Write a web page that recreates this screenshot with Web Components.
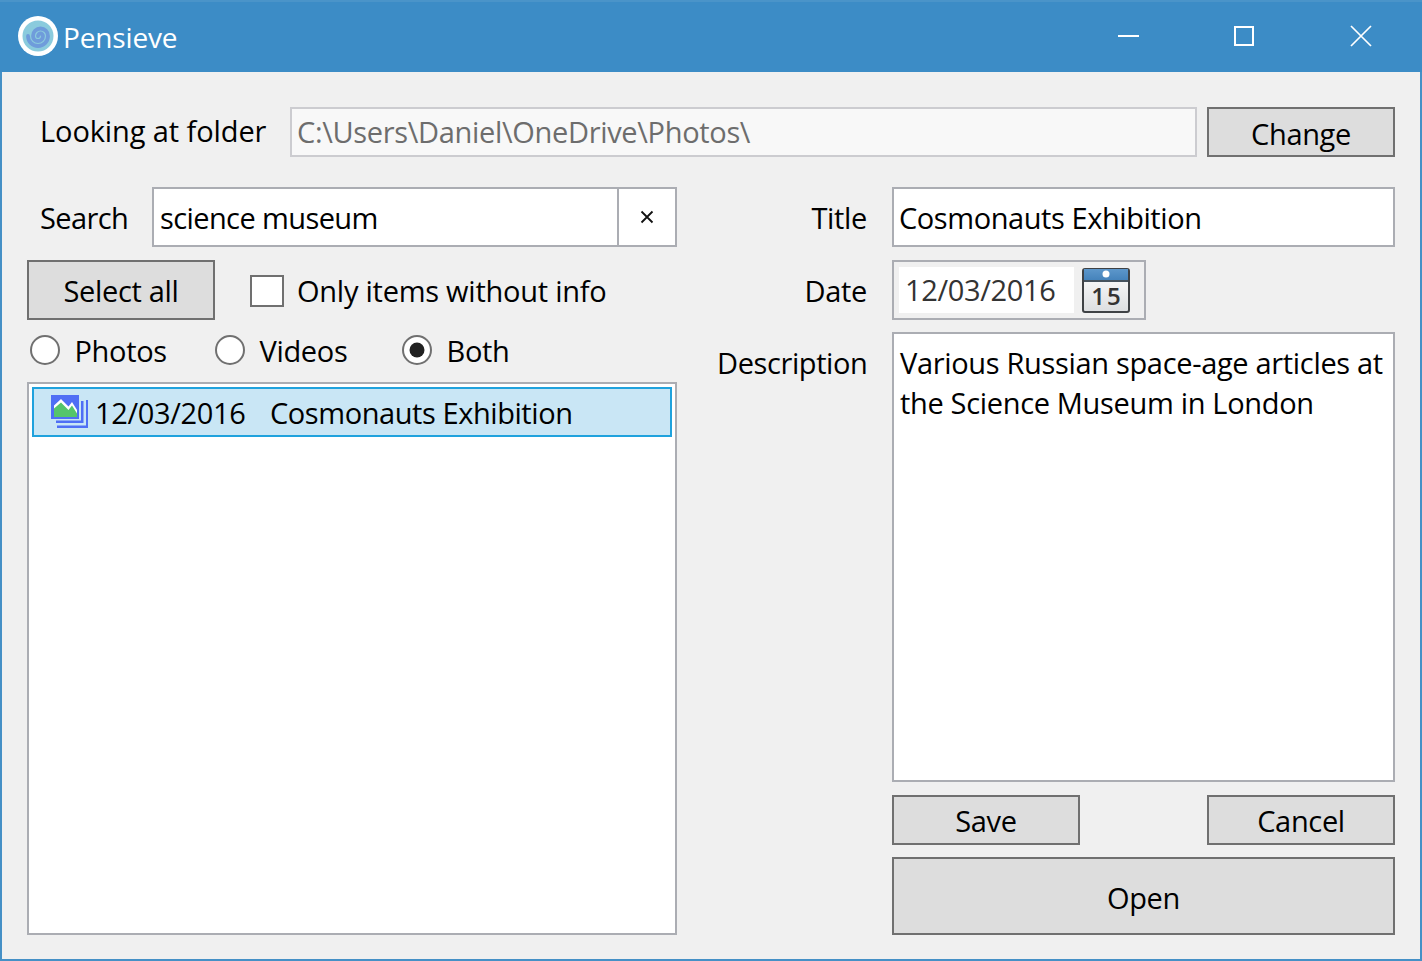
<!doctype html>
<html lang="en">

<head>
  <meta charset="UTF-8" />
  <title>Pensieve</title>
  <style>
    html, body {
      margin: 0;
      padding: 0;
      height: 100%;
      font-family: "Open Sans", "Noto Sans", sans-serif;
      font-size: 29px;
      letter-spacing: -0.33px;
      color: #000;
    }
  </style>
</head>

<body>
  <app-window>
    <title-bar slot="bar">Pensieve</title-bar>

    <div class="folder" slot="folder">
      <ui-label style="letter-spacing:-0.1px">Looking at folder</ui-label>
      <text-field disabled>C:\Users\Daniel\OneDrive\Photos\</text-field>
      <ui-button class="change">Change</ui-button>
    </div>

    <filter-pane slot="left"></filter-pane>
    <details-pane slot="right"></details-pane>
  </app-window>

  <script>
    // small helper so each element only has to give its markup
    class Base extends HTMLElement {
      constructor() {
        super();
        this.attachShadow({ mode: 'open' }).innerHTML = this.markup();
      }
    }

    customElements.define('app-window', class extends Base {
      markup() {
        return `
        <style>
          :host {
            display: flex;
            flex-direction: column;
            height: 961px;
            box-sizing: border-box;
            border: 2px solid #4590c6;
            border-top: 0;
            background: #f0f0f0;
          }
          .body {
            flex: 1;
            padding: 35px 25px 24px 25px;
            display: grid;
            grid-template-columns: 650px 1fr;
            grid-template-rows: 50px 1fr;
            column-gap: 40px;
            row-gap: 30px;
            min-height: 0;
          }
          .top { grid-column: 1 / 3; }
        </style>
        <slot name="bar"></slot>
        <div class="body">
          <div class="top"><slot name="folder"></slot></div>
          <slot name="left"></slot>
          <slot name="right"></slot>
        </div>`;
      }
    });

    customElements.define('title-bar', class extends Base {
      markup() {
        return `
        <style>
          :host {
            display: flex;
            align-items: center;
            height: 72px;
            margin: 0 -2px;
            background: #3c8cc6;
            border-top: 2px solid #4a94c9;
            box-sizing: border-box;
            color: #fff;
            font-size: 28px;
            letter-spacing: -0.15px;
            padding-left: 18px;
          }
          svg.logo { width: 40px; height: 40px; margin-right: 5px; flex: none; margin-bottom: 2px; }
          .name { flex: 1; margin-bottom: 1px; }
          .ctl { display: flex; align-items: center; height: 100%; padding-bottom: 2px; box-sizing: border-box; }
          .ctl svg { display: block; }
        </style>
        <svg class="logo" viewBox="0 0 40 40">
          <circle cx="20" cy="20" r="20" fill="#fff"/>
          <circle cx="20" cy="20" r="15.500" fill="#8bcbdd"/>
          <path d="M20 20a2.500 2.500 0 0 1 5 0a5 5 0 0 1-10 0a7.500 7.500 0 0 1 15 0a10 10 0 0 1-20 0" fill="none" stroke="#6f9cdb" stroke-width="3.800" stroke-linecap="round"/>
        </svg>
        <span class="name"><slot></slot></span>
        <div class="ctl">
          <svg width="22" height="22" viewBox="0 0 22 22" style="margin-right:93px"><path d="M0 11h21" stroke="#fff" stroke-width="2"/></svg>
          <svg width="22" height="22" viewBox="0 0 22 22" style="margin-right:95px"><rect x="2" y="2" width="18" height="18" fill="none" stroke="#fff" stroke-width="2"/></svg>
          <svg width="22" height="22" viewBox="0 0 22 22" style="margin-right:50px"><path d="M1 1l20 20M21 1L1 21" stroke="#fff" stroke-width="1.700"/></svg>
        </div>`;
      }
    });

    customElements.define('ui-label', class extends Base {
      markup() {
        return `
        <style>
          :host { display: block; white-space: nowrap; }
        </style>
        <slot></slot>`;
      }
    });

    customElements.define('ui-button', class extends Base {
      markup() {
        return `
        <style>
          :host {
            display: flex;
            align-items: center;
            justify-content: center;
            box-sizing: border-box;
            border: 2px solid #707070;
            background: #dddddd;
            padding-top: 1px;
            white-space: nowrap;
          }
          :host(.change) { padding-top: 2px; }
        </style>
        <slot></slot>`;
      }
    });

    customElements.define('text-field', class extends Base {
      markup() {
        return `
        <style>
          :host {
            display: flex;
            align-items: center;
            box-sizing: border-box;
            border: 2px solid #abadb3;
            background: #fff;
            padding: 0 6px;
            white-space: nowrap;
            min-width: 0;
          }
          :host([disabled]) {
            background: #f8f8f8;
            border-color: #ccccd0;
            color: #6d6d6d;
            padding: 0 5px 2px;
          }
          :host([multiline]) {
            display: block;
            white-space: normal;
            line-height: 40px;
            padding: 9px 6px;
          }
        </style>
        <slot></slot>`;
      }
    });

    customElements.define('ui-check', class extends Base {
      markup() {
        return `
        <style>
          :host { display: flex; align-items: center; gap: 13px; white-space: nowrap; letter-spacing: -0.25px; }
          .box { width: 34px; height: 32px; margin-top: 2px; box-sizing: border-box; border: 2px solid #707070; background: #fff; flex: none; }
        </style>
        <span class="box"></span><slot></slot>`;
      }
    });

    customElements.define('ui-radio', class extends Base {
      markup() {
        return `
        <style>
          :host { display: flex; align-items: center; gap: 14.500px; white-space: nowrap; }
          svg { width: 30px; height: 30px; flex: none; display: block; }
        </style>
        <svg viewBox="0 0 30 30">
          <circle cx="15" cy="15" r="14" fill="#fff" stroke="#707070" stroke-width="2"/>
          ${this.hasAttribute('checked') ? '<circle cx="15" cy="15" r="7.500" fill="#212121"/>' : ''}
        </svg>
        <slot></slot>`;
      }
    });

    customElements.define('photo-list', class extends Base {
      markup() {
        return `
        <style>
          :host {
            display: block;
            box-sizing: border-box;
            border: 2px solid #abadb3;
            background: #fff;
            padding: 3px;
            flex: 1;
            min-height: 0;
          }
        </style>
        <slot></slot>`;
      }
    });

    customElements.define('list-row', class extends Base {
      markup() {
        return `
        <style>
          :host {
            display: flex;
            align-items: center;
            box-sizing: border-box;
            height: 50px;
            border: 2px solid #1fa2dd;
            background: #c9e6f5;
            padding-left: 17px;
            white-space: nowrap;
            letter-spacing: -0.43px;
          }
          svg { width: 37px; height: 34px; margin-right: 7px; flex: none; margin-bottom: 1px; }
          .date { width: 175px; letter-spacing: -0.33px; }
        </style>
        <svg viewBox="0 0 37 34">
          <path d="M30 6h2.500v22H5v-2.500h25z" fill="#4f6ff5"/>
          <path d="M35 5h2v28H6v-2.500h29z" fill="#4f6ff5"/>
          <rect x="0" y="0" width="28" height="24" fill="#4f6ff5"/>
          <rect x="3" y="3" width="23" height="19" fill="#55c56b"/>
          <path d="M3 3h23v13l-5-8-3.500 4.500L10 5l-7 6z" fill="#4f6ff5"/>
          <path d="M3 10.500L10 4l7.500 7.500L21 7l5 8v3.500l-5-8-3.500 4.500L10 7.500l-7 6z" fill="#fff"/>
        </svg>
        <span class="date"><slot name="date"></slot></span>
        <slot></slot>`;
      }
    });

    customElements.define('date-picker', class extends Base {
      markup() {
        return `
        <style>
          :host {
            display: flex;
            align-items: center;
            box-sizing: border-box;
            width: 254px;
            height: 60px;
            border: 2px solid #abadb3;
            padding: 5px 14px 5px 5px;
            gap: 8px;
          }
          .val {
            flex: 1;
            align-self: stretch;
            background: #fff;
            color: #333;
            display: flex;
            align-items: center;
            padding: 0 0 2px 6px;
            white-space: nowrap;
          }
          svg { width: 48px; height: 45px; flex: none; display: block; }
          text { font: 600 24px "Open Sans", sans-serif; letter-spacing: 2px; fill: #333; }
        </style>
        <div class="val"><slot></slot></div>
        <svg viewBox="0 0 48 45">
          <defs>
            <linearGradient id="pg" x1="0" y1="0" x2="0" y2="1">
              <stop offset="0" stop-color="#ffffff"/><stop offset="1" stop-color="#dcdee0"/>
            </linearGradient>
            <linearGradient id="bg" x1="0" y1="0" x2="0" y2="1">
              <stop offset="0" stop-color="#5d97cb"/><stop offset="1" stop-color="#4583bb"/>
            </linearGradient>
          </defs>
          <rect x="1" y="1" width="46" height="43" rx="2" fill="url(#pg)" stroke="#3f4245" stroke-width="2"/>
          <rect x="2" y="1" width="44" height="11" fill="url(#bg)"/>
          <rect x="2" y="12" width="44" height="2" fill="#46535e"/>
          <circle cx="24" cy="6" r="3.500" fill="#fff"/>
          <text x="25" y="37" text-anchor="middle">15</text>
        </svg>`;
      }
    });

    customElements.define('filter-pane', class extends Base {
      markup() {
        return `
        <style>
          :host { display: flex; flex-direction: column; min-height: 0; }
          .search { display: flex; align-items: center; height: 60px; padding-left: 13px; margin-bottom: 13px; letter-spacing: -0.6px; }
          .search ui-label { width: 112px; flex: none; }
          .search text-field { flex: 1; height: 100%; }
          .clear {
            width: 58px;
            height: 100%;
            flex: none;
            box-sizing: border-box;
            border: 2px solid #abadb3;
            border-left: 0;
            background: #fff;
            display: flex;
            align-items: center;
            justify-content: center;
          }
          .select { display: flex; align-items: center; height: 60px; }
          .select ui-button { width: 188px; height: 100%; flex: none; margin-right: 35px; }
          .radios { display: flex; align-items: center; height: 62px; padding: 0 0 2px 3px; box-sizing: border-box; }
          .radios ui-radio:nth-child(1) { width: 185px; }
          .radios ui-radio:nth-child(2) { width: 187px; }
        </style>
        <div class="search">
          <ui-label>Search</ui-label>
          <text-field>science museum</text-field>
          <div class="clear" aria-label="clear">
            <svg width="14" height="14" viewBox="0 0 14 14"><path d="M1.500 1.500l11 11M12.500 1.500l-11 11" stroke="#111" stroke-width="1.800"/></svg>
          </div>
        </div>
        <div class="select">
          <ui-button>Select all</ui-button>
          <ui-check>Only items without info</ui-check>
        </div>
        <div class="radios">
          <ui-radio>Photos</ui-radio>
          <ui-radio>Videos</ui-radio>
          <ui-radio checked>Both</ui-radio>
        </div>
        <photo-list>
          <list-row><span slot="date">12/03/2016</span>Cosmonauts Exhibition</list-row>
        </photo-list>`;
      }
    });

    customElements.define('details-pane', class extends Base {
      markup() {
        return `
        <style>
          :host {
            display: grid;
            grid-template-columns: 150px 503px;
            grid-template-rows: 60px 61px 450px 51px 78px;
            column-gap: 25px;
            row-gap: 12px;
            min-height: 0;
          }
          ui-label { text-align: right; line-height: 60px; padding-top: 1px; }
          ui-label.date { padding-top: 2px; }
          ui-label.top { line-height: 1; padding-top: 16px; letter-spacing: -0.4px; }
          .title { padding-left: 5px; letter-spacing: -0.43px; }
          date-picker { align-self: end; }
          .actions { display: flex; justify-content: space-between; align-self: end; height: 50px; }
          .actions ui-button { width: 188px; }
        </style>
        <ui-label>Title</ui-label>
        <text-field class="title">Cosmonauts Exhibition</text-field>
        <ui-label class="date">Date</ui-label>
        <date-picker>12/03/2016</date-picker>
        <ui-label class="top">Description</ui-label>
        <text-field multiline>Various Russian space-age articles at the Science Museum in London</text-field>
        <span></span>
        <div class="actions"><ui-button>Save</ui-button><ui-button>Cancel</ui-button></div>
        <span></span>
        <ui-button class="change">Open</ui-button>`;
      }
    });
  </script>
  <style>
    .folder { display: grid; grid-template-columns: 263px 907px 198px; height: 50px; align-items: stretch; }
    .folder ui-label { line-height: 48px; padding-left: 13px; }
    .folder ui-button { margin-left: 10px; }
  </style>
</body>

</html>
